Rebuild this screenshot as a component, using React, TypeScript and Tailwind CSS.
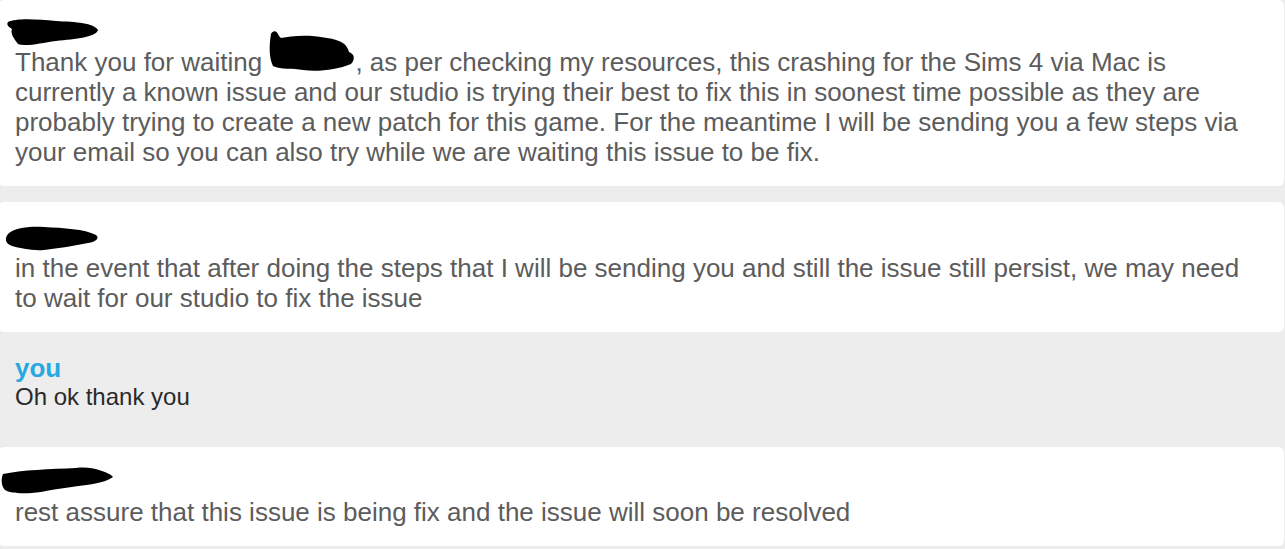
import React from "react";

const font = { fontFamily: '"Liberation Sans", Arial, Helvetica, sans-serif' };

function Blob({ w, h, d }: { w: number; h: number; d: string }) {
  return (
    <svg width={w} height={h} viewBox={`0 0 ${w} ${h}`} className="block">
      <path d={d} fill="#000" />
    </svg>
  );
}

export default function App() {
  return (
    <div
      className="w-[1285px] h-[549px] overflow-hidden bg-[#ededed] text-[#5c5c5c]"
      style={font}
    >
      {/* Card 1 */}
      <div className="bg-white rounded-[6px] mr-[1px] -ml-[2px] pl-[17px] pr-[40px] pt-[17px] pb-[19px] h-[186px]">
        <div className="h-[30px] -ml-[9px]">
          <Blob
            w={92}
            h={30}
            d="M2 5 C10 1 30 2 50 4 C70 5 88 6 92 13 C90 20 70 22 50 24 C35 26 20 30 12 27 C8 22 4 16 6 12 C3 10 0 8 2 5 Z"
          />
        </div>
        <p className="text-[26px] leading-[30px] tracking-[0px]">
          Thank you for waiting{" "}
          <span className="relative inline-block w-[86px] h-[20px] align-baseline">
            <svg
              width="90"
              height="44"
              viewBox="0 0 90 44"
              className="absolute left-[-2px] top-[-21px]"
            >
              <path
                d="M4 4 C6 0 10 0 12 6 L14 8 C24 6 40 4 60 8 C74 10 80 14 82 22 C88 24 88 30 84 34 C70 40 50 42 36 40 C26 38 14 40 6 36 C2 28 2 16 4 4 Z"
                fill="#000"
              />
            </svg>
          </span>
          , as per checking my resources, this crashing for the Sims 4 via Mac is
          currently a known issue and our studio is trying their best to fix this in
          soonest time possible as they are probably trying to create a new patch for
          this game. For the meantime I will be sending you a few steps via your email
          so you can also try while we are waiting this issue to be fix.
        </p>
      </div>

      {/* Card 2 */}
      <div className="mt-[16px] bg-white rounded-[6px] mr-[1px] -ml-[2px] pl-[17px] pr-[40px] pt-[22px] pb-[19px] h-[130px]">
        <div className="h-[29px] -ml-[11px]">
          <Blob
            w={96}
            h={28}
            d="M4 10 C10 4 24 2 40 3 C60 4 80 5 92 11 C96 14 92 18 84 19 C70 22 55 24 40 26 C28 27 16 24 8 22 C2 20 0 15 4 10 Z"
          />
        </div>
        <p className="text-[26px] leading-[30px]">
          in the event that after doing the steps that I will be sending you and still
          the issue still persist, we may need to wait for our studio to fix the issue
        </p>
      </div>

      {/* User message */}
      <div className="h-[115px] pl-[15px] pt-[22px]">
        <div className="text-[26px] leading-[28px] font-bold text-[#27a8e0]">you</div>
        <div className="text-[24px] leading-[30px] text-[#2a2a2a]">Oh ok thank you</div>
      </div>

      {/* Card 3 */}
      <div className="bg-white rounded-[6px] mr-[1px] -ml-[2px] pl-[17px] pr-[40px] pt-[19px] h-[99px]">
        <div className="h-[31px] -ml-[14px]">
          <Blob
            w={112}
            h={30}
            d="M2 8 C20 4 50 3 75 2 C85 1 92 2 98 4 C104 6 110 8 112 11 C108 14 102 16 92 18 C80 20 60 22 40 26 C25 28 10 28 4 24 C0 20 0 12 2 8 Z"
          />
        </div>
        <p className="text-[26px] leading-[30px]">
          rest assure that this issue is being fix and the issue will soon be resolved
        </p>
      </div>

      {/* Next partially visible line */}
      <div className="h-[20px] pl-[508px] pt-[1px] text-[24px] leading-[24px] text-[#333]">
        <span>it's ok. thanks</span>
      </div>
    </div>
  );
}
